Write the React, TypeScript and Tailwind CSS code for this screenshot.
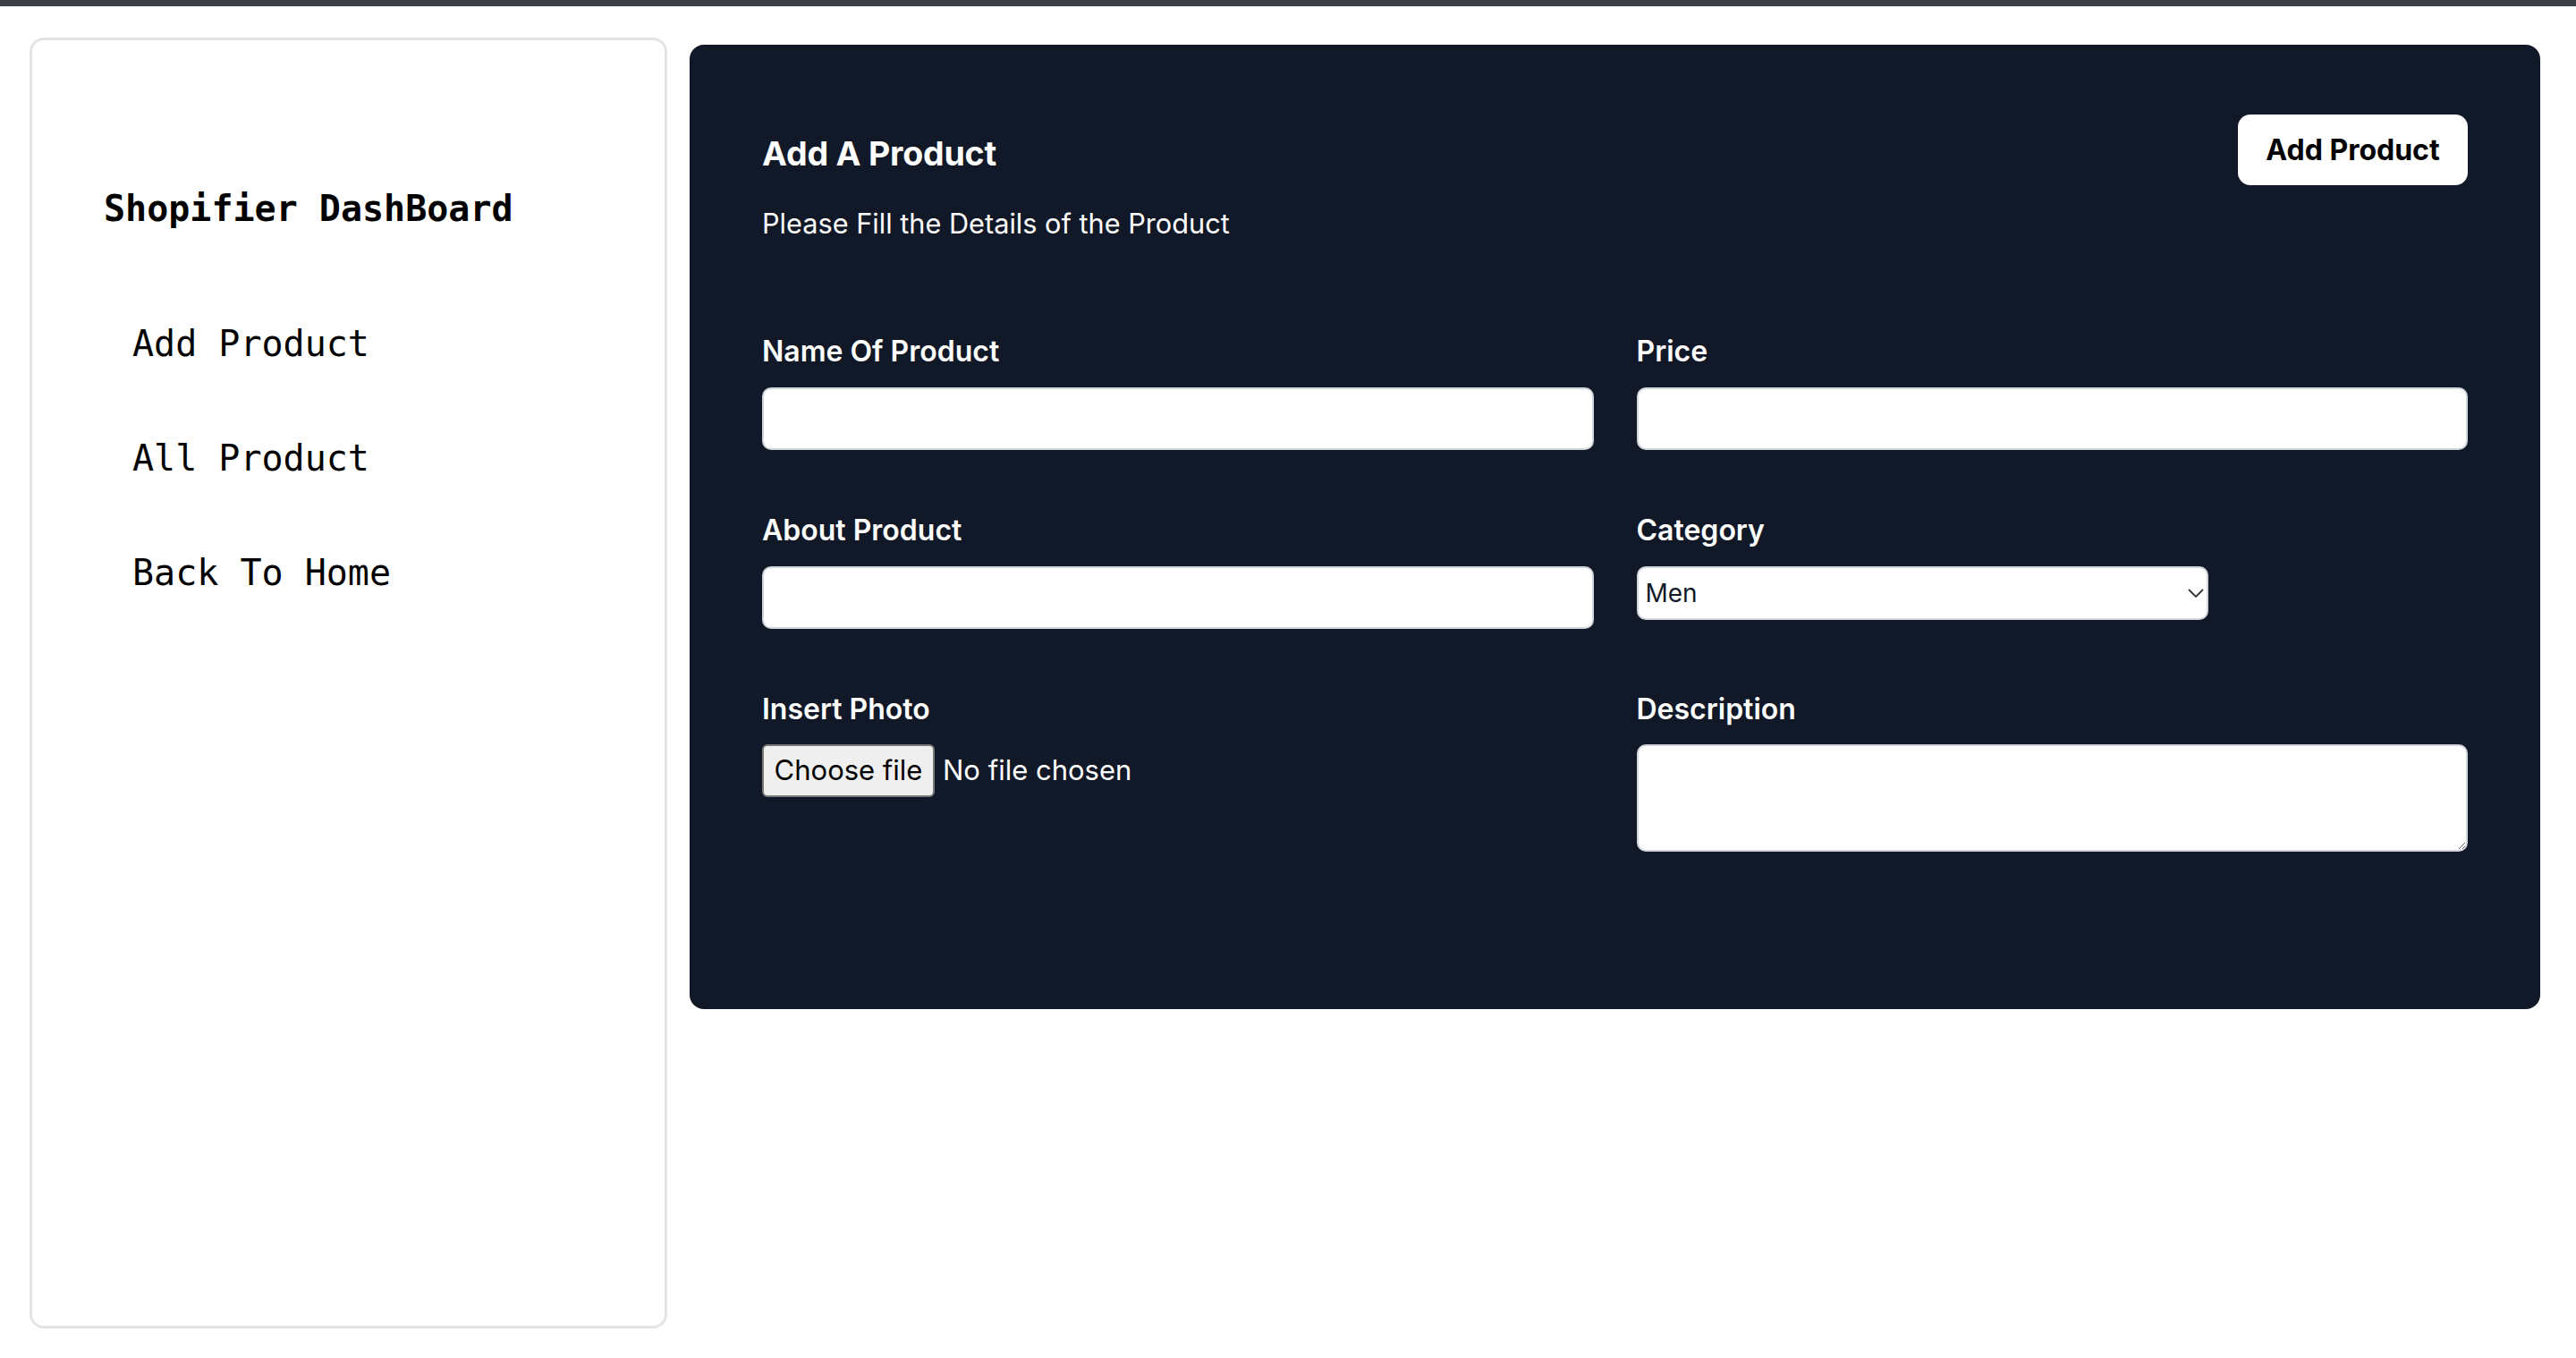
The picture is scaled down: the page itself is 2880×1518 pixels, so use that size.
import { useState } from 'react'

const menu = ['Add Product', 'All Product', 'Back To Home']

function Sidebar() {
  return (
    <aside className="w-[713px] h-[1443px] shrink-0 rounded-[16px] border-[3px] border-[#e3e4e8] bg-white pl-[80px] pt-[168px] font-['DejaVu_Sans_Mono',monospace] text-black">
      <h1 className="text-[40px] leading-[40px] font-bold">Shopifier DashBoard</h1>
      <nav className="mt-[111px] ml-[32px] flex flex-col gap-[88px]">
        {menu.map(item => (
          <a key={item} href="#" className="text-[40px] leading-[40px]">
            {item}
          </a>
        ))}
      </nav>
    </aside>
  )
}

function Field({ label, children }: { label: string; children: React.ReactNode }) {
  return (
    <div className="flex flex-col">
      <label className="pt-[2px] text-[32px] leading-[40px] font-semibold text-white">{label}</label>
      <div className="mt-[20px]">{children}</div>
    </div>
  )
}

const inputCls = 'block w-full h-[70px] rounded-[10px] border-2 border-[#d1d5db] bg-white px-4 text-[28px] text-gray-900 outline-none'

function ProductForm() {
  const [category, setCategory] = useState('Men')

  return (
    <main className="mt-[8px] w-[2069px] shrink-0 rounded-[16px] bg-[#111827] px-[81px] pt-[78px] pb-[176px] font-['Inter',sans-serif] text-white">
      {/* Header */}
      <div className="flex items-start justify-between">
        <div className="pt-[24px]">
          <h2 className="text-[37.5px] leading-[40px] font-bold tracking-[-0.2px]">Add A Product</h2>
          <p className="mt-[38px] text-[30.7px] leading-[40px]">Please Fill the Details of the Product</p>
        </div>
        <button className="h-[79px] w-[257px] rounded-[14px] bg-white text-[32px] font-bold text-black">
          Add Product
        </button>
      </div>

      {/* Form */}
      <div className="mt-[101px] grid grid-cols-2 gap-x-[48px] gap-y-[68px]">
        <Field label="Name Of Product">
          <input type="text" className={inputCls} />
        </Field>
        <Field label="Price">
          <input type="text" className={inputCls} />
        </Field>
        <Field label="About Product">
          <input type="text" className={inputCls} />
        </Field>
        <Field label="Category">
          <div className="relative w-[639px]">
            <select
              value={category}
              onChange={e => setCategory(e.target.value)}
              className="block h-[60px] w-full appearance-none rounded-[10px] border-2 border-[#d1d5db] bg-white pl-[8px] text-[28px] text-[#111827] outline-none"
            >
              <option>Men</option>
              <option>Women</option>
              <option>Kids</option>
            </select>
            <svg
              className="pointer-events-none absolute right-[5px] top-[25px]"
              width="18"
              height="10"
              viewBox="0 0 18 10"
              fill="none"
            >
              <polyline points="1,1 9,9 17,1" stroke="#333" strokeWidth="1.8" />
            </svg>
          </div>
        </Field>
        <Field label="Insert Photo">
          <div className="-mt-px flex items-center">
            <button className="h-[59px] w-[193px] rounded-[6px] border-2 border-[#7a7a7a] bg-[#efefef] text-[31px] text-black">
              Choose file
            </button>
            <span className="ml-[9px] text-[31px] text-white">No file chosen</span>
          </div>
        </Field>
        <Field label="Description">
          <textarea className="-mt-px block h-[120px] w-full rounded-[10px] border-2 border-[#d1d5db] bg-white px-4 py-2 text-[28px] text-gray-900 outline-none" />
        </Field>
      </div>
    </main>
  )
}

export default function App() {
  return (
    <div className="min-h-screen bg-white">
      <div className="h-[7px] bg-[#3b3e45]" />
      <div className="flex items-start gap-[25px] pl-[33px] pt-[35px]">
        <Sidebar />
        <ProductForm />
      </div>
    </div>
  )
}
